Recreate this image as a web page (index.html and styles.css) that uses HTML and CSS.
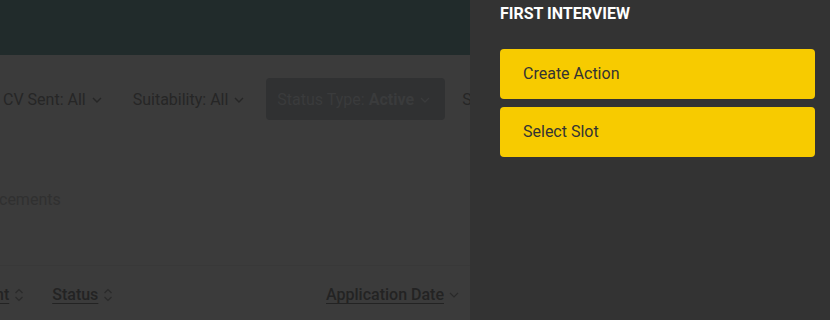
FILE: index.html
```html
<!DOCTYPE html>
<html lang="en">
<head>
    <meta charset="UTF-8">
    <meta name="viewport" content="width=device-width, initial-scale=1.0">
    <title>Applications</title>
    <link rel="stylesheet" href="styles.css">
</head>
<body>
    <div class="screen">
        <!-- Page behind the drawer (dimmed) -->
        <div class="page">
            <div class="header"></div>

            <div class="filters">
                <div class="filter filter-cv">CV Sent: All
                    <svg class="chev" width="10" height="6" viewBox="0 0 10 6"><path d="M1 1 L5 5 L9 1" fill="none" stroke="currentColor" stroke-width="1.4"/></svg>
                </div>
                <div class="filter filter-suit">Suitability: All
                    <svg class="chev" width="10" height="6" viewBox="0 0 10 6"><path d="M1 1 L5 5 L9 1" fill="none" stroke="currentColor" stroke-width="1.4"/></svg>
                </div>
                <div class="filter filter-active">Status Type:&nbsp;<b>Active</b>
                    <svg class="chev" width="10" height="6" viewBox="0 0 10 6"><path d="M1 1 L5 5 L9 1" fill="none" stroke="currentColor" stroke-width="1.4"/></svg>
                </div>
                <div class="filter">S</div>
            </div>

            <div class="summary">cements</div>

            <div class="table-head">
                <div class="col col-first"><u>nt</u>
                    <svg class="sort" width="10" height="18" viewBox="0 0 10 18"><path d="M1.5 7 L5 3.5 L8.5 7 M1.5 11 L5 14.5 L8.5 11" fill="none" stroke="#2a2a2a" stroke-width="1.2"/></svg>
                </div>
                <div class="col col-status"><u>Status</u>
                    <svg class="sort" width="10" height="18" viewBox="0 0 10 18"><path d="M1.5 7 L5 3.5 L8.5 7 M1.5 11 L5 14.5 L8.5 11" fill="none" stroke="#2a2a2a" stroke-width="1.2"/></svg>
                </div>
                <div class="col col-date"><u>Application Date</u>
                    <svg class="sort" width="10" height="8" viewBox="0 0 10 8"><path d="M1 2 L5 6 L9 2" fill="none" stroke="#2a2a2a" stroke-width="1.2"/></svg>
                </div>
            </div>
        </div>

        <!-- Drawer -->
        <div class="drawer">
            <h3>FIRST INTERVIEW</h3>
            <div class="actions">
                <button class="action-btn">Create Action</button>
                <button class="action-btn">Select Slot</button>
            </div>
        </div>
    </div>
</body>
</html>
```
FILE: styles.css
```css
/* Basic reset */
* {
    margin: 0;
    padding: 0;
    box-sizing: border-box;
}

body {
    font-family: Roboto, "Liberation Sans", Arial, sans-serif;
    width: 830px;
    height: 320px;
    overflow: hidden;
    background: #3b3b3b;
}

.screen {
    display: flex;
    height: 320px;
}

/* Dimmed page */
.page {
    width: 470px;
    overflow: hidden;
    background: #3b3b3b;
    color: #252525;
}

.header {
    height: 55px;
    background: #212b2b;
}

.filters {
    display: flex;
    align-items: center;
    margin-top: 23px;
    height: 42px;
    font-size: 16px;
    white-space: nowrap;
}

.filter {
    height: 42px;
    display: flex;
    align-items: center;
    flex-shrink: 0;
    color: #262626;
}

.filter-cv {
    padding-left: 3px;
    margin-right: 31px;
}

.filter-suit {
    margin-right: 22px;
}

.filter-active {
    background: #303132;
    border-radius: 4px;
    color: #3a3b3c;
    width: 179px;
    padding-left: 11px;
    margin-right: 17px;
}

.filter-active b {
    font-weight: 700;
}

.chev {
    margin-left: 6px;
    margin-top: 2px;
}

.summary {
    margin-top: 70px;
    font-size: 16px;
    color: #303030;
    height: 20px;
    line-height: 20px;
    margin-left: -1px;
}

.table-head {
    display: flex;
    align-items: center;
    margin-top: 55px;
    border-top: 1px solid #383838;
    padding-top: 19px;
    font-size: 16px;
    font-weight: 500;
    color: #232323;
    white-space: nowrap;
}

.col {
    display: flex;
    align-items: center;
}

.col u {
    text-underline-offset: 3px;
}

.sort {
    margin-left: 5px;
}

.col-first {
    margin-left: -5px;
}

.col-status {
    margin-left: 28px;
}

.col-date {
    margin-left: auto;
    margin-right: 11px;
}

/* Drawer */
.drawer {
    width: 360px;
    background: #333333;
    padding: 4px 15px 0 30px;
}

.drawer h3 {
    color: #ffffff;
    font-size: 16px;
    font-weight: 700;
    line-height: 20px;
}

.actions {
    display: flex;
    flex-direction: column;
    gap: 8px;
    margin-top: 25px;
}

.action-btn {
    height: 50px;
    border: none;
    border-radius: 4px;
    background: #f7cb00;
    color: #333333;
    font-family: Roboto, "Liberation Sans", Arial, sans-serif;
    font-size: 16px;
    text-align: left;
    padding-left: 23px;
    padding-bottom: 2px;
}
```
